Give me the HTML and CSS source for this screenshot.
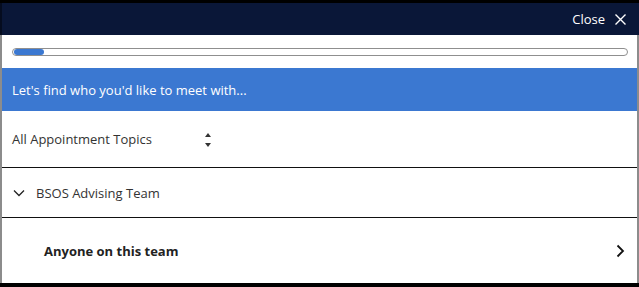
FILE: index.html
```html
<!DOCTYPE html>
<html lang="en">
<head>
  <meta charset="UTF-8">
  <title>Schedule Appointment</title>
  <link rel="stylesheet" href="styles.css">
</head>
<body>
  <div class="modal">
    <!-- Header -->
    <div class="modal-header">
      <button class="close-btn">Close
        <svg width="13" height="13" viewBox="0 0 13 13"><path d="M1.5 1.5 L11.5 11.5 M11.5 1.5 L1.5 11.5" stroke="#fff" stroke-width="1.4" fill="none"/></svg>
      </button>
    </div>

    <div class="modal-body">
      <!-- Progress -->
      <div class="progress-wrap">
        <div class="progress"><div class="progress-fill"></div></div>
      </div>

      <div class="banner">Let's find who you'd like to meet with...</div>

      <!-- Topic select -->
      <div class="topic-row">
        <span class="topic-label">All Appointment Topics</span>
        <span class="sort-arrows">
          <svg width="8" height="16" viewBox="0 0 8 16"><path d="M4 1 L7 5 L1 5 Z" fill="#333"/><path d="M1 11 L7 11 L4 15 Z" fill="#333"/></svg>
        </span>
      </div>

      <!-- Team -->
      <div class="team-row">
        <svg class="chev-down" width="12" height="8" viewBox="0 0 12 8"><path d="M1 1.5 L6 6.5 L11 1.5" stroke="#222" stroke-width="1.3" fill="none"/></svg>
        <span>BSOS Advising Team</span>
      </div>

      <div class="member-row">
        <span class="member-name">Anyone on this team</span>
        <svg width="9" height="14" viewBox="0 0 9 14"><path d="M1.5 1.5 L7 7 L1.5 12.5" stroke="#111" stroke-width="1.8" fill="none"/></svg>
      </div>
    </div>
  </div>
</body>
</html>
```

FILE: styles.css
```css
* {
  margin: 0;
  padding: 0;
  box-sizing: border-box;
}
body {
  font-family: "Open Sans", Arial, sans-serif;
  background-color: #000;
  color: #333;
  width: 639px;
  height: 287px;
  overflow: hidden;
}
/* Modal shell */
.modal {
  margin-top: 3px;
  height: 280px;
  display: flex;
  flex-direction: column;
  background-color: #fff;
}
.modal-header {
  height: 32px;
  background-color: #0a1738;
  border-left: 2px solid #050c1f;
  display: flex;
  justify-content: flex-end;
  align-items: center;
  padding-right: 12px;
}
.close-btn {
  background: none;
  border: none;
  color: #fff;
  font-family: inherit;
  font-size: 13px;
  display: flex;
  align-items: center;
  gap: 9px;
  cursor: pointer;
}
.modal-body {
  flex: 1;
  border-left: 2px solid #8c8c8c;
  border-right: 2px solid #8c8c8c;
  display: flex;
  flex-direction: column;
}
/* Progress bar */
.progress-wrap {
  height: 33px;
  padding: 13px 9px 0 10px;
}
.progress {
  height: 8px;
  border: 1px solid #8f8f8f;
  border-radius: 4px;
  background: #fff;
  padding: 0 1px;
}
.progress-fill {
  width: 30px;
  height: 6px;
  border-radius: 3px;
  background-color: #3b78d1;
}
/* Blue banner */
.banner {
  height: 43px;
  background-color: #3b78d1;
  color: #fff;
  font-size: 13px;
  display: flex;
  align-items: center;
  padding-left: 10px;
}
/* Rows */
.topic-row {
  height: 57px;
  display: flex;
  align-items: center;
  padding-left: 10px;
  font-size: 13px;
  border-bottom: 1px solid #111;
}
.topic-label {
  width: 192px;
}
.sort-arrows {
  display: flex;
  margin-top: 2px;
}
.team-row {
  height: 50px;
  display: flex;
  align-items: center;
  padding-left: 11px;
  font-size: 13px;
  border-bottom: 1px solid #111;
}
.chev-down {
  margin-right: 11px;
  margin-top: 1px;
}
.member-row {
  flex: 1;
  display: flex;
  align-items: center;
  justify-content: space-between;
  padding-left: 42px;
  padding-right: 12px;
}
.member-name {
  font-size: 13px;
  font-weight: bold;
  color: #222;
}
```
